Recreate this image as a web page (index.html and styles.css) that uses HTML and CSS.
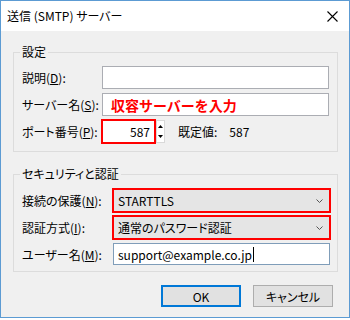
FILE: index.html
```html
<!DOCTYPE html>
<html lang="ja">
<head>
    <meta charset="UTF-8">
    <title>送信 (SMTP) サーバー</title>
    <link rel="stylesheet" href="styles.css">
</head>
<body>
<div class="window">
    <div class="titlebar">
        <span class="title">送信 (SMTP) サーバー</span>
        <svg class="close" width="11" height="11" viewBox="0 0 11 11">
            <path d="M0.5 0.5L10.5 10.5M10.5 0.5L0.5 10.5" stroke="#000" stroke-width="1.1" fill="none"/>
        </svg>
    </div>
    <div class="content">
        <fieldset class="group group-server">
            <legend>設定</legend>
            <div class="row">
                <span class="label">説明(<u>D</u>):</span>
                <div class="textbox"></div>
            </div>
            <div class="row">
                <span class="label">サーバー名(<u>S</u>):</span>
                <div class="textbox hint">収容サーバーを入力</div>
            </div>
            <div class="row">
                <span class="label">ポート番号(<u>P</u>):</span>
                <div class="port-line">
                    <div class="textbox port mark">587</div>
                    <div class="spin">
                        <span class="spin-btn"><svg width="5" height="3" viewBox="0 0 5 3"><path d="M2.5 0L5 3H0Z" fill="#000"/></svg></span>
                        <span class="spin-btn"><svg width="5" height="3" viewBox="0 0 5 3"><path d="M0 0H5L2.5 3Z" fill="#000"/></svg></span>
                    </div>
                    <span class="default-label">既定値:</span>
                    <span class="default-value">587</span>
                </div>
            </div>
        </fieldset>

        <fieldset class="group group-auth">
            <legend>セキュリティと認証</legend>
            <div class="row">
                <span class="label">接続の保護(<u>N</u>):</span>
                <div class="combo mark">
                    <span>STARTTLS</span>
                    <svg width="7" height="4" viewBox="0 0 7 4"><path d="M0.5 0.5L3.5 3.5L6.5 0.5" stroke="#555" fill="none"/></svg>
                </div>
            </div>
            <div class="row">
                <span class="label">認証方式(<u>I</u>):</span>
                <div class="combo mark">
                    <span>通常のパスワード認証</span>
                    <svg width="7" height="4" viewBox="0 0 7 4"><path d="M0.5 0.5L3.5 3.5L6.5 0.5" stroke="#555" fill="none"/></svg>
                </div>
            </div>
            <div class="row row-user">
                <span class="label">ユーザー名(<u>M</u>):</span>
                <div class="textbox user">support@example.co.jp<span class="caret"></span></div>
            </div>
        </fieldset>

        <div class="buttons">
            <div class="btn btn-default">OK</div>
            <div class="btn">キャンセル</div>
        </div>
    </div>
</div>
</body>
</html>
```

FILE: styles.css
```css
* {
    margin: 0;
    padding: 0;
    box-sizing: border-box;
}

body {
    background: #fff;
    font-family: "Noto Sans CJK JP", sans-serif;
    font-size: 12px;
    color: #000;
}

.window {
    width: 350px;
    height: 318px;
    border: 1px solid #5c9bd3;
    background: #f0f0f0;
    display: flex;
    flex-direction: column;
}

.titlebar {
    height: 30px;
    background: #fff;
    display: flex;
    align-items: center;
    justify-content: space-between;
    padding: 0 11px 0 6px;
}

.title {
    font-feature-settings: "palt";
    line-height: 16px;
}

.content {
    padding: 13px 11px 0 12px;
}

.group {
    border: 1px solid #dcdcdc;
    padding: 6px 8px 8px 8px;
}

.group legend {
    margin-left: -2px;
    padding: 0 2px;
    line-height: 16px;
    font-feature-settings: "palt";
}

.group-auth {
    margin-top: 14px;
    padding: 7px 7px 6px 8px;
}

.row {
    display: grid;
    grid-template-columns: 80px 1fr;
    align-items: center;
    height: 23px;
    margin-bottom: 4px;
}

.row:last-child {
    margin-bottom: 0;
}

.group-auth .row {
    grid-template-columns: 91px 1fr;
}

.group-auth .row-user {
    height: 22px;
    margin-top: 2px;
}

.label {
    font-feature-settings: "palt";
    white-space: nowrap;
}

.textbox {
    height: 23px;
    background: #fff;
    border: 1px solid #abadb3;
    display: flex;
    align-items: center;
    padding-left: 4px;
    white-space: nowrap;
}

.hint {
    color: #f00;
    font-weight: bold;
    font-size: 14px;
    padding-left: 8px;
}

.mark {
    outline: 2px solid #f00;
    outline-offset: -1px;
}

.port-line {
    display: flex;
    align-items: center;
}

.port {
    width: 53px;
    justify-content: flex-end;
    padding: 0 4px 0 0;
}

.spin {
    width: 9px;
    height: 23px;
    margin-left: 1px;
    display: flex;
    flex-direction: column;
    background: #fff;
    border: 1px solid #d9d9d9;
}

.spin-btn {
    flex: 1;
    display: flex;
    align-items: center;
    justify-content: center;
}

.default-label {
    margin-left: 13px;
    font-feature-settings: "palt";
}

.default-value {
    margin-left: 12px;
}

.combo {
    height: 23px;
    background: #e5e5e5;
    border: 1px solid #adadad;
    display: flex;
    align-items: center;
    justify-content: space-between;
    padding: 0 6px 0 4px;
    font-feature-settings: "palt";
}

.user {
    height: 22px;
    border-color: #7f9db9;
}

.caret {
    display: inline-block;
    width: 1px;
    height: 15px;
    background: #000;
    margin-left: 1px;
}

.buttons {
    display: flex;
    justify-content: flex-end;
    gap: 12px;
    margin-top: 13px;
    padding-right: 5px;
}

.btn {
    width: 80px;
    height: 22px;
    background: #e1e1e1;
    border: 1px solid #adadad;
    display: flex;
    align-items: center;
    justify-content: center;
    font-feature-settings: "palt";
}

.btn-default {
    border: 2px solid #0078d7;
}
```
